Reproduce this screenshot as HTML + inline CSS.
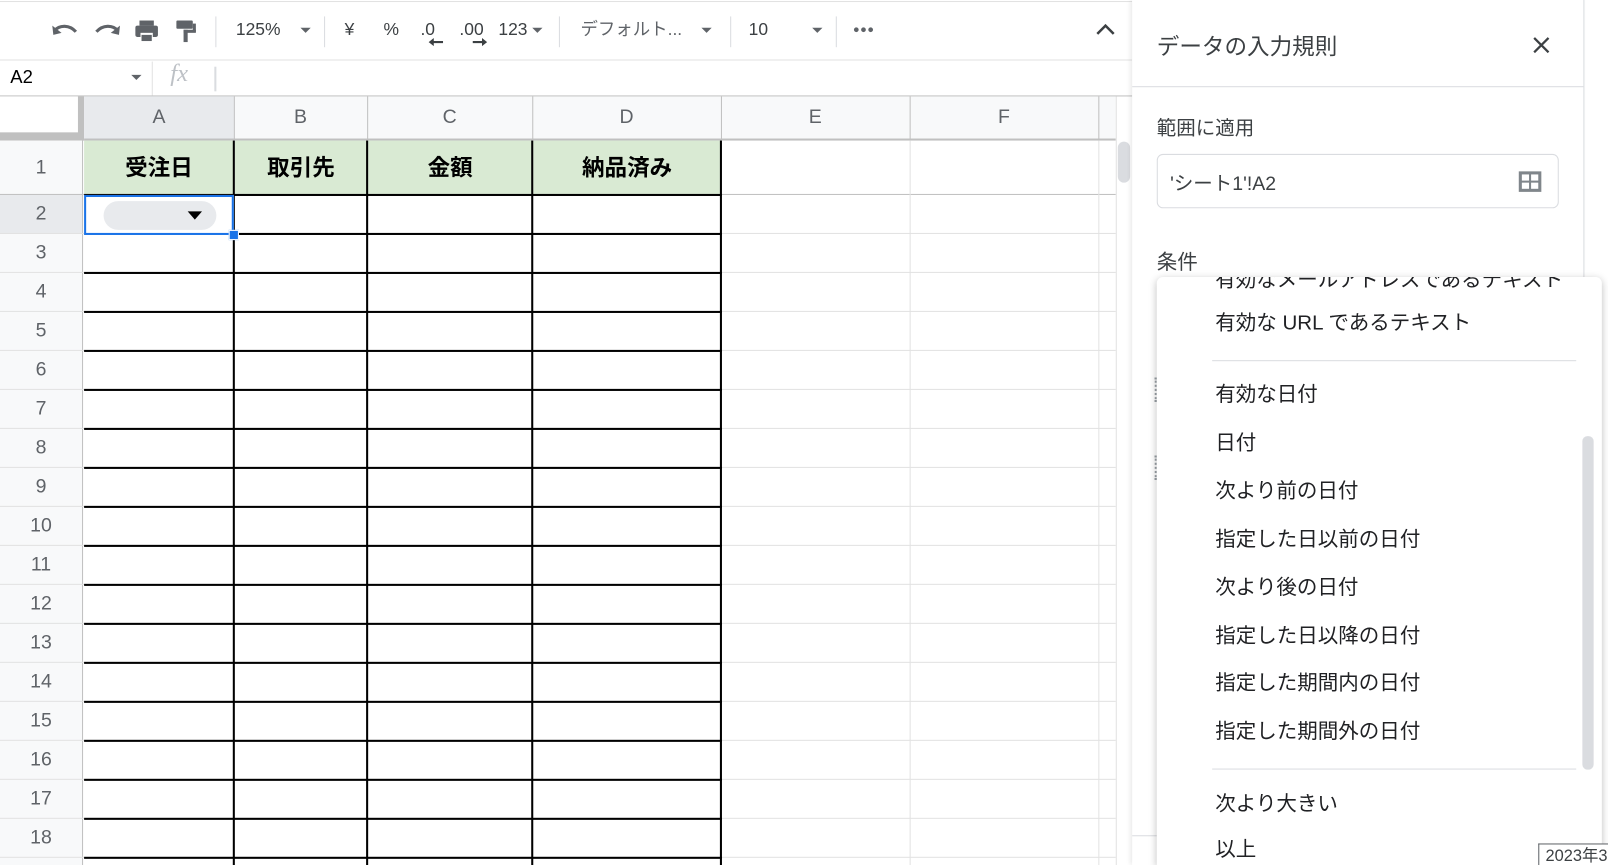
<!DOCTYPE html>
<html><head><meta charset="utf-8"><style>
html,body{margin:0;padding:0;width:1608px;height:865px;overflow:hidden;background:#fff}
#w{position:absolute;left:0;top:0;width:1568px;height:843px;overflow:hidden;transform:scale(1.02551,1.02610);transform-origin:0 0;font-family:"Liberation Sans","Noto Sans CJK JP",sans-serif;color:#3c4043}
.a{position:absolute}
.h{position:absolute;height:1px;background:#e2e2e2}
.v{position:absolute;width:1px;background:#e2e2e2}
.bh{position:absolute;height:2px;background:#000}
.bv{position:absolute;width:2px;background:#000}
.rn{position:absolute;left:0;width:80px;text-align:center;font-size:19px;color:#5f6368}
.ch{position:absolute;top:93px;height:43px;line-height:43px;text-align:center;font-size:19px;color:#5f6368}
.hd{position:absolute;top:137px;height:53px;line-height:53px;text-align:center;font-size:22px;font-weight:bold;color:#000;background:#d9ead3}
.tb{position:absolute;top:18px;font-size:17px;color:#3c4043;line-height:22px}
.sep{position:absolute;top:16px;width:1px;height:30px;background:#dadce0}
.it{position:absolute;left:1185px;font-size:20px;color:#202124;line-height:24px}
.tri{position:absolute;width:0;height:0;border-left:5px solid transparent;border-right:5px solid transparent;border-top:5px solid #5f6368}
</style></head><body><div id="w">
<div class="h" style="left:0;top:1px;width:1104px"></div>
<svg class="a" style="left:48px;top:17px" width="160" height="26" viewBox="0 0 160 26">
<path d="M5 13 C10 7 20 7 26 14" fill="none" stroke="#5f6368" stroke-width="3"/><path d="M3 8 L4 17 L12 15 Z" fill="#5f6368"/>
<path d="M67 13 C62 7 52 7 46 14" fill="none" stroke="#5f6368" stroke-width="3"/><path d="M69 8 L68 17 L60 15 Z" fill="#5f6368"/>
<rect x="88" y="3" width="14" height="5" fill="#5f6368"/><rect x="84" y="8" width="22" height="11" rx="2" fill="#5f6368"/><rect x="89" y="15" width="12" height="7" fill="#fff"/><rect x="90" y="17" width="10" height="6" fill="#5f6368"/>
<rect x="124" y="3" width="16" height="8" rx="1" fill="#5f6368"/><rect x="140" y="6" width="3" height="8" fill="#5f6368"/><rect x="131" y="12" width="12" height="3" fill="#5f6368"/><rect x="131" y="12" width="4" height="12" fill="#5f6368"/>
</svg>
<div class="sep" style="left:210px"></div>
<div class="tb" style="left:230px">125%</div><div class="tri" style="left:293px;top:27px"></div>
<div class="sep" style="left:316px"></div>
<div class="tb" style="left:336px">¥</div>
<div class="tb" style="left:374px">%</div>
<div class="tb" style="left:410px">.0</div>
<svg class="a" style="left:417px;top:36px" width="16" height="10"><path d="M15 5 H4" stroke="#3c4043" stroke-width="2"/><path d="M1 5 L6 1 L6 9 Z" fill="#3c4043"/></svg>
<div class="tb" style="left:448px">.00</div>
<svg class="a" style="left:460px;top:36px" width="16" height="10"><path d="M1 5 H12" stroke="#3c4043" stroke-width="2"/><path d="M15 5 L10 1 L10 9 Z" fill="#3c4043"/></svg>
<div class="tb" style="left:486px">123</div><div class="tri" style="left:519px;top:27px"></div>
<div class="sep" style="left:545px"></div>
<div class="tb" style="left:566px;color:#5f6368">デフォルト...</div><div class="tri" style="left:684px;top:27px"></div>
<div class="sep" style="left:712px"></div>
<div class="tb" style="left:730px">10</div><div class="tri" style="left:792px;top:27px"></div>
<div class="sep" style="left:815px"></div>
<svg class="a" style="left:832px;top:26px" width="22" height="6"><circle cx="3" cy="3" r="2.3" fill="#5f6368"/><circle cx="10" cy="3" r="2.3" fill="#5f6368"/><circle cx="17" cy="3" r="2.3" fill="#5f6368"/></svg>
<svg class="a" style="left:1068px;top:22px" width="20" height="14"><path d="M2 11 L10 3 L18 11" fill="none" stroke="#3c4043" stroke-width="2.5"/></svg>
<div class="h" style="left:0;top:58px;width:1104px"></div>
<div class="a" style="left:10px;top:65px;font-size:18px;color:#000">A2</div>
<div class="tri" style="left:128px;top:73px"></div>
<div class="v" style="left:148px;top:60px;height:33px"></div>
<div class="a" style="left:166px;top:59px;font-size:24px;color:#bdc1c6;font-style:italic;font-family:'Liberation Serif',serif">fx</div>
<div class="a" style="left:209px;top:65px;width:2px;height:24px;background:#dadce0"></div>
<div class="h" style="left:0;top:93px;width:1104px;background:#c0c0c0"></div>
<div class="a" style="left:0;top:94px;width:82px;height:43px;background:#f8f9fa"></div>
<div class="a" style="left:0;top:94px;width:76px;height:35px;background:#fff"></div>
<div class="a" style="left:76px;top:94px;width:6px;height:43px;background:#c0c0c0"></div>
<div class="a" style="left:0;top:129px;width:82px;height:8px;background:#c0c0c0"></div>
<div class="a" style="left:82px;top:94px;width:1006px;height:42px;background:#f8f9fa"></div>
<div class="a" style="left:82px;top:94px;width:146px;height:42px;background:#e8eaed"></div>
<div class="ch" style="left:82px;width:146px">A</div>
<div class="ch" style="left:228px;width:130px">B</div>
<div class="ch" style="left:358px;width:161px">C</div>
<div class="ch" style="left:519px;width:184px">D</div>
<div class="ch" style="left:703px;width:184px">E</div>
<div class="ch" style="left:887px;width:184px">F</div>
<div class="v" style="left:228px;top:94px;height:42px;background:#c0c0c0"></div>
<div class="v" style="left:358px;top:94px;height:42px;background:#c0c0c0"></div>
<div class="v" style="left:519px;top:94px;height:42px;background:#c0c0c0"></div>
<div class="v" style="left:703px;top:94px;height:42px;background:#c0c0c0"></div>
<div class="v" style="left:887px;top:94px;height:42px;background:#c0c0c0"></div>
<div class="v" style="left:1071px;top:94px;height:42px;background:#c0c0c0"></div>
<div class="h" style="left:82px;top:135px;width:1006px;height:2px;background:#c0c0c0"></div>
<div class="a" style="left:0;top:137px;width:80px;height:706px;background:#f8f9fa"></div>
<div class="a" style="left:0;top:190px;width:80px;height:38px;background:#e8eaed"></div>
<div class="v" style="left:80px;top:137px;height:706px;background:#c0c0c0"></div>
<div class="rn" style="top:137px;line-height:53px">1</div>
<div class="rn" style="top:190px;line-height:38px">2</div>
<div class="rn" style="top:228px;line-height:38px">3</div>
<div class="rn" style="top:266px;line-height:38px">4</div>
<div class="rn" style="top:304px;line-height:38px">5</div>
<div class="rn" style="top:342px;line-height:38px">6</div>
<div class="rn" style="top:380px;line-height:38px">7</div>
<div class="rn" style="top:418px;line-height:38px">8</div>
<div class="rn" style="top:456px;line-height:38px">9</div>
<div class="rn" style="top:494px;line-height:38px">10</div>
<div class="rn" style="top:532px;line-height:38px">11</div>
<div class="rn" style="top:570px;line-height:38px">12</div>
<div class="rn" style="top:608px;line-height:38px">13</div>
<div class="rn" style="top:646px;line-height:38px">14</div>
<div class="rn" style="top:684px;line-height:38px">15</div>
<div class="rn" style="top:722px;line-height:38px">16</div>
<div class="rn" style="top:760px;line-height:38px">17</div>
<div class="rn" style="top:798px;line-height:38px">18</div>
<div class="hd" style="left:82px;width:146px">受注日</div>
<div class="hd" style="left:229px;width:129px">取引先</div>
<div class="hd" style="left:359px;width:160px">金額</div>
<div class="hd" style="left:520px;width:183px">納品済み</div>
<div class="h" style="left:0;top:189px;width:1088px;background:#c0c0c0"></div>
<div class="h" style="left:0;top:227px;width:1088px"></div><div class="h" style="left:0;top:265px;width:1088px"></div><div class="h" style="left:0;top:303px;width:1088px"></div><div class="h" style="left:0;top:341px;width:1088px"></div><div class="h" style="left:0;top:379px;width:1088px"></div><div class="h" style="left:0;top:417px;width:1088px"></div><div class="h" style="left:0;top:455px;width:1088px"></div><div class="h" style="left:0;top:493px;width:1088px"></div><div class="h" style="left:0;top:531px;width:1088px"></div><div class="h" style="left:0;top:569px;width:1088px"></div><div class="h" style="left:0;top:607px;width:1088px"></div><div class="h" style="left:0;top:645px;width:1088px"></div><div class="h" style="left:0;top:683px;width:1088px"></div><div class="h" style="left:0;top:721px;width:1088px"></div><div class="h" style="left:0;top:759px;width:1088px"></div><div class="h" style="left:0;top:797px;width:1088px"></div><div class="h" style="left:0;top:835px;width:1088px"></div>
<div class="v" style="left:887px;top:137px;height:706px"></div>
<div class="v" style="left:1071px;top:137px;height:706px"></div>
<div class="v" style="left:1088px;top:94px;height:749px"></div>
<div class="bh" style="left:82px;top:189px;width:622px"></div>
<div class="bh" style="left:82px;top:227px;width:622px"></div><div class="bh" style="left:82px;top:265px;width:622px"></div><div class="bh" style="left:82px;top:303px;width:622px"></div><div class="bh" style="left:82px;top:341px;width:622px"></div><div class="bh" style="left:82px;top:379px;width:622px"></div><div class="bh" style="left:82px;top:417px;width:622px"></div><div class="bh" style="left:82px;top:455px;width:622px"></div><div class="bh" style="left:82px;top:493px;width:622px"></div><div class="bh" style="left:82px;top:531px;width:622px"></div><div class="bh" style="left:82px;top:569px;width:622px"></div><div class="bh" style="left:82px;top:607px;width:622px"></div><div class="bh" style="left:82px;top:645px;width:622px"></div><div class="bh" style="left:82px;top:683px;width:622px"></div><div class="bh" style="left:82px;top:721px;width:622px"></div><div class="bh" style="left:82px;top:759px;width:622px"></div><div class="bh" style="left:82px;top:797px;width:622px"></div><div class="bh" style="left:82px;top:835px;width:622px"></div>
<div class="bv" style="left:227px;top:137px;height:706px"></div>
<div class="bv" style="left:357px;top:137px;height:706px"></div>
<div class="bv" style="left:518px;top:137px;height:706px"></div>
<div class="bv" style="left:702px;top:137px;height:706px"></div>
<div class="a" style="left:82px;top:190px;width:142px;height:35px;border:2px solid #1a73e8;background:#fff"></div>
<div class="a" style="left:101px;top:196px;width:110px;height:28px;border-radius:14px;background:#e8eaed"></div>
<div class="a" style="left:183px;top:206px;width:0;height:0;border-left:7px solid transparent;border-right:7px solid transparent;border-top:8px solid #000"></div>
<div class="a" style="left:223px;top:224px;width:8px;height:8px;background:#1a73e8;border:1px solid #fff"></div>
<div class="a" style="left:1090px;top:138px;width:12px;height:40px;border-radius:6px;background:#dadce0"></div>
<div class="a" style="left:1104px;top:0;width:441px;height:843px;background:#fff;box-shadow:-2px 0 4px rgba(0,0,0,0.08)"></div>
<div class="v" style="left:1544px;top:0;height:843px;background:#dadce0"></div>
<div class="a" style="left:1128px;top:28px;font-size:22px;color:#3c4043">データの入力規則</div>
<svg class="a" style="left:1494px;top:35px" width="18" height="18"><path d="M2 2 L16 16 M16 2 L2 16" stroke="#3c4043" stroke-width="2.2"/></svg>
<div class="h" style="left:1104px;top:84px;width:440px;background:#dadce0"></div>
<div class="a" style="left:1128px;top:110px;font-size:19px;color:#3c4043">範囲に適用</div>
<div class="a" style="left:1128px;top:150px;width:390px;height:51px;border:1px solid #dadce0;border-radius:6px"></div>
<div class="a" style="left:1141px;top:164px;font-size:19px;color:#3c4043">'シート1'!A2</div>
<svg class="a" style="left:1480px;top:166px" width="24" height="22"><rect x="1" y="1" width="22" height="20" fill="#80868b"/><rect x="4" y="4" width="7" height="6" fill="#fff"/><rect x="13" y="4" width="7" height="6" fill="#fff"/><rect x="4" y="12" width="7" height="6" fill="#fff"/><rect x="13" y="12" width="7" height="6" fill="#fff"/></svg>
<div class="a" style="left:1128px;top:239px;font-size:20px;color:#3c4043">条件</div>
<div class="h" style="left:1104px;top:814px;width:440px;background:#dadce0"></div>
<div class="a" style="left:1126px;top:368px;width:2px;height:24px;border-left:2px dotted #9aa0a6"></div>
<div class="a" style="left:1126px;top:444px;width:2px;height:24px;border-left:2px dotted #9aa0a6"></div>
<div class="a" style="left:1128px;top:270px;width:434px;height:573px;background:#fff;border-radius:6px 6px 0 0;box-shadow:0 2px 8px rgba(0,0,0,0.25);overflow:hidden">
<div class="a" style="left:57px;top:-14px;font-size:20px;color:#202124;white-space:nowrap">有効なメールアドレスであるテキスト</div>
</div>
<div class="it" style="top:303px">有効な URL であるテキスト</div>
<div class="h" style="left:1182px;top:351px;width:355px;background:#dadce0"></div>
<div class="it" style="top:373px">有効な日付</div>
<div class="it" style="top:420px">日付</div>
<div class="it" style="top:467px">次より前の日付</div>
<div class="it" style="top:514px">指定した日以前の日付</div>
<div class="it" style="top:561px">次より後の日付</div>
<div class="it" style="top:608px">指定した日以降の日付</div>
<div class="it" style="top:654px">指定した期間内の日付</div>
<div class="it" style="top:701px">指定した期間外の日付</div>
<div class="h" style="left:1182px;top:749px;width:355px;background:#dadce0"></div>
<div class="it" style="top:772px">次より大きい</div>
<div class="it" style="top:816px;line-height:24px;height:27px;overflow:hidden">以上</div>
<div class="a" style="left:1543px;top:425px;width:11px;height:325px;border-radius:5px;background:#dadce0"></div>
<div class="a" style="left:1500px;top:822px;width:61px;height:20px;border:1px solid #5f6368;border-bottom:none;background:#fff;font-size:16px;line-height:24px;padding-left:6px;color:#3c4043;white-space:nowrap;overflow:hidden">2023年3</div>
</div></body></html>
